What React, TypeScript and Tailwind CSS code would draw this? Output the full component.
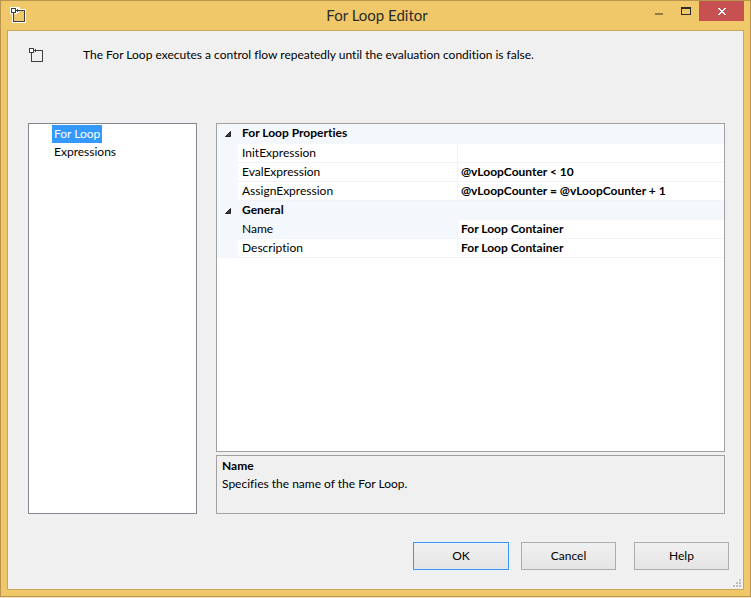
import { useState } from "react";

type Property = { name: string; value: string };
type Category = { title: string; items: Property[] };

const categories: Category[] = [
  {
    title: "For Loop Properties",
    items: [
      { name: "InitExpression", value: "" },
      { name: "EvalExpression", value: "@vLoopCounter < 10" },
      { name: "AssignExpression", value: "@vLoopCounter = @vLoopCounter + 1" },
    ],
  },
  {
    title: "General",
    items: [
      { name: "Name", value: "For Loop Container" },
      { name: "Description", value: "For Loop Container" },
    ],
  },
];

function LoopIcon({ halo = false }: { halo?: boolean }) {
  return (
    <svg width="16" height="16" viewBox="0 0 16 16" shapeRendering="crispEdges" aria-hidden="true">
      {halo && <path d="M0 0h10v2h6v14H2V7H0z" fill="#fff" />}
      <rect x="3.500" y="3.500" width="11" height="11" fill={halo ? "#f0c869" : "#f0f0f0"} stroke="#3f3f3f" />
      {halo && <path d="M4 4h5v2H7v1H4z" fill="#fff" />}
      <rect x="1.500" y="1.500" width="4" height="4" fill="#fff" stroke="#3f3f3f" />
      <path d="M6 3h3v1H6zM7 2h1v3H7z" fill="#3f3f3f" />
    </svg>
  );
}

function TitleBar() {
  return (
    <header className="flex h-[29px] items-start pl-[9px] pr-1.5">
      <div className="flex flex-1 pt-1.5">
        <LoopIcon halo />
      </div>
      <h1 className="pt-0.5 text-[15px] leading-6 text-[#2b2b2b]">For Loop Editor</h1>
      <div className="flex flex-1 justify-end">
        <button aria-label="Minimize" className="flex h-5 w-7 items-center justify-center">
          <svg width="8" height="14" shapeRendering="crispEdges">
            <rect y="9" width="8" height="2" fill="#8f7a45" />
          </svg>
        </button>
        <button aria-label="Maximize" className="flex h-5 w-[26px] items-center justify-center">
          <svg width="10" height="8" shapeRendering="crispEdges">
            <path d="M0 0h10v8H0zM1 2v5h8V2z" fill="#2b2b2b" fillRule="evenodd" />
          </svg>
        </button>
        <button aria-label="Close" className="flex h-5 w-[45px] items-center justify-center bg-[#c75050]">
          <svg width="8" height="7" viewBox="0 0 8 7" shapeRendering="crispEdges">
            <path
              d="M0 0h2v1h1v1h2V1h1V0h2v1H7v1H6v1H5v1h1v1h1v1h1v1H6V6H5V5H3v1H2v1H0V6h1V5h1V4h1V3H2V2H1V1H0z"
              fill="#fff"
            />
          </svg>
        </button>
      </div>
    </header>
  );
}

function PropertyGrid({ selected, onSelect }: { selected: string; onSelect: (name: string) => void }) {
  return (
    <div className="flex-1 border border-[#a0a0a0] bg-white">
      <table className="w-full table-fixed border-separate border-spacing-0">
        <colgroup>
          <col className="w-[21px]" />
          <col className="w-[220px]" />
          <col />
        </colgroup>
        {categories.map((category, index) => (
          <tbody key={category.title}>
            <tr className={index === 0 ? "h-5 bg-[#f4f7fc]" : "h-[19px] bg-[#f4f7fc]"}>
              <td className="p-0">
                <button aria-label={"Collapse " + category.title} className="flex w-full justify-center">
                  <svg width="6" height="6">
                    <path d="M5.500 .5v5H.5z" fill="#404040" stroke="#202020" />
                  </svg>
                </button>
              </td>
              <th colSpan={2} className="p-0 pl-1 text-left align-top font-bold leading-[18px]">
                {category.title}
              </th>
            </tr>
            {category.items.map((item) => {
              const id = "prop-" + item.name;
              return (
                <tr key={item.name} className="h-[19px]" onClick={() => onSelect(item.name)}>
                  <td className="bg-[#f4f7fc] p-0" />
                  <td
                    className={
                      "border-b border-r border-[#f0f3f8] p-0 pl-1 " + (selected === item.name ? "bg-[#f4f7fc]" : "")
                    }
                  >
                    <label htmlFor={id} className="block leading-[18px]">
                      {item.name}
                    </label>
                  </td>
                  <td className="border-b border-[#f0f3f8] p-0">
                    <input
                      id={id}
                      defaultValue={item.value}
                      className="block h-[18px] w-full bg-transparent pl-[3px] font-bold outline-none"
                    />
                  </td>
                </tr>
              );
            })}
          </tbody>
        ))}
      </table>
    </div>
  );
}

export default function App() {
  const [page, setPage] = useState("For Loop");
  const [selected, setSelected] = useState("Name");

  return (
    <div className="flex min-h-screen flex-col bg-[#f3e3bd] pb-px font-['Lato','Open_Sans',sans-serif] text-[12px] text-black [font-variant-ligatures:none]">
      <div className="flex flex-1 flex-col border border-[#b8974c] bg-[#f0c869]">
        <TitleBar />
        <main className="relative mx-1.5 mb-1.5 flex flex-1 flex-col border border-[#c9a757] bg-[#f0f0f0] pb-[19px] pl-5 pr-3.5">
          <div className="flex h-[92px] items-start pt-4">
            <LoopIcon />
            <p className="pl-[39px] leading-4">
              The For Loop executes a control flow repeatedly until the evaluation condition is false.
            </p>
          </div>
          <div className="flex flex-1 gap-[19px] pr-1">
            <nav className="w-[169px] border border-[#828790] bg-white pl-[23px] pt-px">
              {["For Loop", "Expressions"].map((name) => (
                <button
                  key={name}
                  onClick={() => setPage(name)}
                  className={
                    "block h-[18px] px-0.5 leading-[18px] " + (page === name ? "bg-[#3399ff] text-white" : "")
                  }
                >
                  {name}
                </button>
              ))}
            </nav>
            <section className="flex flex-1 flex-col gap-[3px]">
              <PropertyGrid selected={selected} onSelect={setSelected} />
              <div className="h-[59px] border border-[#a0a0a0] px-[5px] pt-px leading-[18px]">
                <h2 className="font-bold">Name</h2>
                <p>Specifies the name of the For Loop.</p>
              </div>
            </section>
          </div>
          <footer className="flex justify-end pt-7">
            <button className="mr-3 h-7 w-24 border border-[#3399ff] bg-linear-to-b from-[#f0f0f0] to-[#e5e5e5]">
              OK
            </button>
            <button className="mr-[18px] h-7 w-[95px] border border-[#acacac] bg-linear-to-b from-[#f0f0f0] to-[#e5e5e5]">
              Cancel
            </button>
            <button className="h-7 w-[95px] border border-[#acacac] bg-linear-to-b from-[#f0f0f0] to-[#e5e5e5]">
              Help
            </button>
          </footer>
          <svg
            width="8"
            height="8"
            className="absolute bottom-0.5 right-0.5"
            shapeRendering="crispEdges"
            aria-hidden="true"
          >
            <path d="M6 0h2v2H6zM3 3h2v2H3zM6 3h2v2H6zM0 6h2v2H0zM3 6h2v2H3zM6 6h2v2H6z" fill="#bfbfbf" />
          </svg>
        </main>
      </div>
    </div>
  );
}
